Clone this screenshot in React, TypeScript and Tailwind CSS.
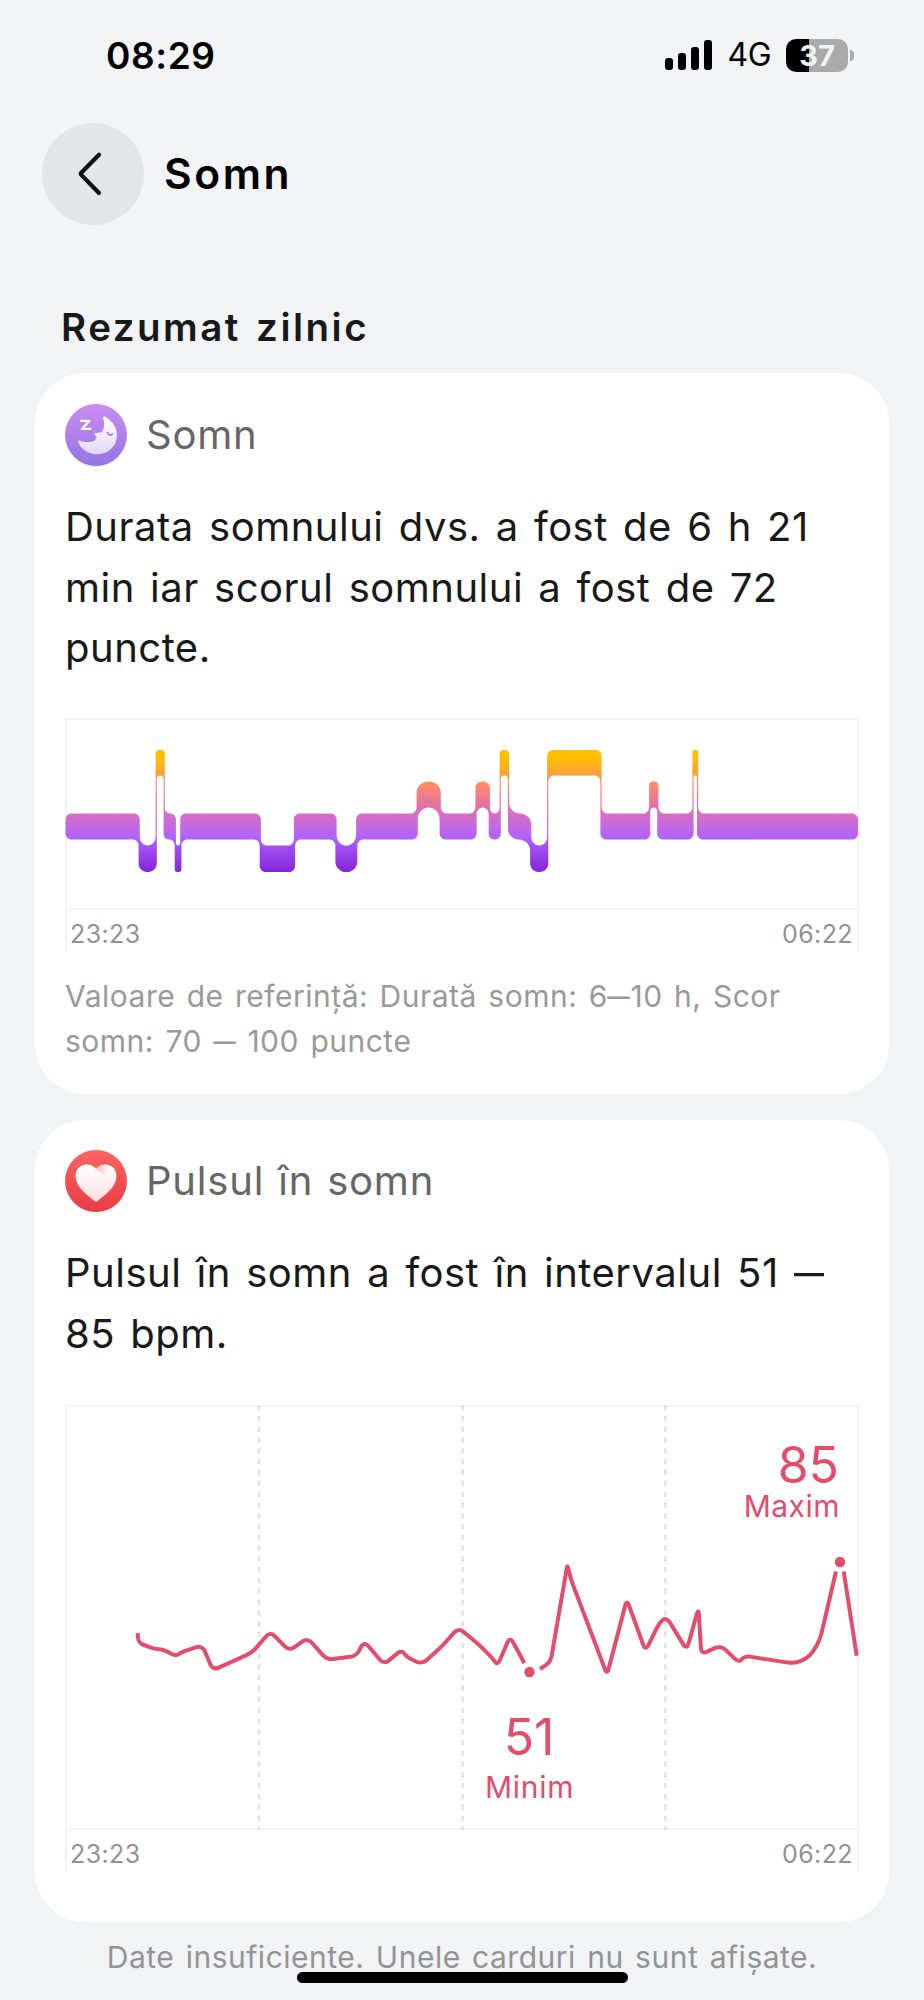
import React from 'react'

type Stage = 'awake' | 'rem' | 'light' | 'deep'

// top and bottom of every sleep stage inside the chart
const LEVELS: Record<Stage, [number, number]> = {
    awake: [31, 56.5],
    rem: [62.5, 88.5],
    light: [94.5, 120.5],
    deep: [126.5, 153],
}

// stage and the x where it ends
const STAGES: [Stage, number][] = [
    ['light', 74.2],
    ['deep', 91.2],
    ['awake', 99.2],
    ['light', 110.3],
    ['deep', 115.8],
    ['light', 195.3],
    ['deep', 229.5],
    ['light', 271],
    ['deep', 291.7],
    ['light', 352.2],
    ['rem', 375.2],
    ['light', 411],
    ['rem', 424.3],
    ['light', 435.2],
    ['awake', 443.5],
    ['light', 465.7],
    ['deep', 482.7],
    ['awake', 536],
    ['light', 584.7],
    ['rem', 592.8],
    ['light', 628],
    ['awake', 632.6],
    ['light', 793],
]

type Point = [number, number, number?]

const PULSE: Point[][] = [
    [
        [72.7, 228], [73.3, 238], [91, 244.3], [97.7, 244.3], [111, 251.3], [116, 247.3], [137.3, 240.3], [147.8, 265.3],
        [187, 247.7], [205.3, 226.5], [224.3, 246], [242.5, 232.8], [262, 254.8], [291.5, 251], [299, 236], [319, 259.5],
        [337, 244.5], [341, 251.7], [357, 259.3], [376.7, 241.5], [393.5, 222.7], [415, 240.5], [428.5, 254.5],
        [432.5, 260.5], [445, 231.5], [459.3, 258],
    ],
    [
        [475, 264], [485.5, 257], [488, 243], [502.3, 160, 2], [506.5, 176], [538, 259], [542, 270], [561.8, 194.5],
        [580.5, 246], [594.5, 217.5], [601.5, 212], [621.7, 245], [633.5, 203], [636.3, 249.5], [655.7, 240.3],
        [674.5, 258], [679, 250.7], [715, 256.5, 15], [735, 259, 15], [753, 243, 15], [771, 166.5],
    ],
    [
        [778.7, 166.5], [791.7, 250.7],
    ],
]

// polyline with rounded corners, the third item of a point is its radius
function roundPath(points: Point[], radius: number, closed = false) {
    const n = points.length
    let d = ''
    points.forEach((p, i) => {
        if (!closed && (i === 0 || i === n - 1)) {
            d += `${i ? 'L' : 'M'}${p[0]} ${p[1]}`
            return
        }
        const prev = points[(i - 1 + n) % n]
        const next = points[(i + 1) % n]
        const a = Math.hypot(prev[0] - p[0], prev[1] - p[1]) || 1
        const b = Math.hypot(next[0] - p[0], next[1] - p[1]) || 1
        const r = p[2] ?? radius
        const ra = Math.min(r, a / 2)
        const rb = Math.min(r, b / 2)
        const at = (q: Point, len: number, dist: number) =>
            `${(p[0] + ((q[0] - p[0]) * dist) / len).toFixed(2)} ${(p[1] + ((q[1] - p[1]) * dist) / len).toFixed(2)}`
        d += `${i ? 'L' : 'M'}${at(prev, a, ra)}C${at(prev, a, ra * 0.45)} ${at(next, b, rb * 0.45)} ${at(next, b, rb)}`
    })
    return closed ? d + 'Z' : d
}

function stagesPath() {
    const top: Point[] = []
    const bottom: Point[] = []
    let start = 0.5
    STAGES.forEach(([stage, end], i) => {
        const [y1, y2] = LEVELS[stage]
        const w = end - start
        const r = w < 10 ? w / 2.2 : w < 25 ? w / 2 : 6
        const prev = STAGES[i - 1]
        const next = STAGES[i + 1]
        // half of the thin line between two stages
        const s = prev ? (LEVELS[prev[0]][0] < y1 ? 0.6 : -0.6) : 0
        const e = next ? (LEVELS[next[0]][0] > y1 ? 0.6 : -0.6) : 0
        top.push([start + s, y1, r], [end + e, y1, r])
        bottom.push([start - s, y2, r], [end - e, y2, r])
        start = end
    })
    return roundPath([...top, ...bottom.reverse()], 6, true)
}

const StatusBar = () => (
    <div className="flex h-[110px] items-center justify-between pl-[106px] pr-[70px]">
        <span className="text-[37px] font-semibold leading-none tracking-[0.6px] text-black">08:29</span>
        <div className="flex items-center">
            <div className="flex h-[30px] items-end gap-[5px]">
                <i className="h-[12px] w-[8px] rounded-[3px] bg-black" />
                <i className="h-[17px] w-[8px] rounded-[3px] bg-black" />
                <i className="h-[23px] w-[8px] rounded-[3px] bg-black" />
                <i className="h-[30px] w-[8px] rounded-[3px] bg-black" />
            </div>
            <span className="ml-[15px] text-[32px] leading-none tracking-[-0.5px] text-black">4G</span>
            <div className="ml-[15px] flex h-[33px] w-[62px] items-center justify-center rounded-[10px] bg-[linear-gradient(90deg,#000_37%,#aaa_37%)] text-[29px] font-bold leading-none text-[#f2f3f5]">
                37
            </div>
            <i className="ml-[2px] h-[11px] w-[4px] rounded-r-full bg-[#aaa]" />
        </div>
    </div>
)

const MoonIcon = () => (
    <svg className="size-[62px]" viewBox="0 0 184 184">
        <defs>
            <linearGradient id="moonBg" x1="0" y1="0" x2="0" y2="1">
                <stop offset="0" stopColor="#cb8cef" />
                <stop offset="1" stopColor="#9475e4" />
            </linearGradient>
            <linearGradient id="moon" x1="0" y1="0" x2="0" y2="1">
                <stop offset="0" stopColor="#fff" />
                <stop offset="1" stopColor="#e3d8fa" />
            </linearGradient>
        </defs>
        <circle cx="92" cy="92" r="92" fill="url(#moonBg)" />
        <path d="M48 50h24L50 74h25" fill="none" stroke="#fff" strokeWidth="7" strokeLinecap="round" strokeLinejoin="round" />
        <path
            d="M113 41c1-4 5-5 8-2 21 12 33 31 33 53 0 33-25 57-58 57-27 0-50-15-57-36-1-4 2-6 5-4 13 5 31 5 44 0 4-2 1-5 4-7 3-1 3-3 1-5-3-4-6-6-5-9 2-3 17-2 21-5 9-10 8-26 4-42z"
            fill="url(#moon)"
        />
        <path d="M126 85c3 7 10 9 15 4" fill="none" stroke="#9b78e4" strokeWidth="5" strokeLinecap="round" />
    </svg>
)

const HeartIcon = () => (
    <svg className="size-[62px]" viewBox="0 0 62 62">
        <defs>
            <linearGradient id="heartBg" x1="0" y1="0" x2="0" y2="1">
                <stop offset="0" stopColor="#fb6562" />
                <stop offset="1" stopColor="#ea3b45" />
            </linearGradient>
            <linearGradient id="heart" x1="0" y1="0" x2="0" y2="1">
                <stop offset="0" stopColor="#fff" />
                <stop offset="1" stopColor="#fde0e1" />
            </linearGradient>
            <radialGradient id="heartFold" gradientUnits="userSpaceOnUse" cx="33" cy="19" r="11">
                <stop offset="0" stopColor="#fbb9b6" stopOpacity="0.9" />
                <stop offset="1" stopColor="#fbb9b6" stopOpacity="0" />
            </radialGradient>
        </defs>
        <circle cx="31" cy="31" r="31" fill="url(#heartBg)" />
        <path
            d="M31 18.500C28 15.500 25 14.500 21.500 14.500 15 14.500 10.500 19.500 10.500 26 10.500 36 19.500 43 29.500 51Q31 52 32.500 51C42.500 43 51.500 36 51.500 26 51.500 19.500 47 14.500 40.500 14.500 37 14.500 34 15.500 31 18.500Z"
            fill="url(#heart)"
        />
        <path d="M31 18.500C34 15.500 37 14.500 40.500 14.500 45 14.500 48 17 49.500 20L43 30Q38 24 31 18.500Z" fill="url(#heartFold)" />
    </svg>
)

const CardTitle = ({ icon, title }: { icon: React.ReactNode; title: string }) => (
    <div className="flex h-[62px] items-center gap-[19px] text-[40px] text-[#666]">
        {icon}
        <span className="tracking-[0.8px] [word-spacing:2px]">{title}</span>
    </div>
)

// wide en dash
const Dash = () => <span className="mx-[0.12em] inline-block scale-x-[1.5]">–</span>

const TimeRow = () => (
    <div className="flex h-[41px] justify-between border-x-2 border-[#f3f3f4] pl-[3px] pr-[4px] pt-[9px] text-[25px] leading-[30px] tracking-[0.4px] text-[#929292]">
        <span>23:23</span>
        <span>06:22</span>
    </div>
)

const App = () => {
    return (
        <div className="flex h-[2000px] w-[924px] flex-col overflow-hidden bg-[#f2f3f5] font-['Inter',sans-serif]">
            <StatusBar />

            <header className="mt-[12px] flex h-[103px] items-center gap-[20px] pl-[42px]">
                <button className="flex size-[102px] items-center justify-center rounded-full bg-[#e4e5e7]">
                    <svg className="size-[50px]" viewBox="0 0 50 50" fill="none" stroke="#111" strokeWidth="4.200" strokeLinecap="round" strokeLinejoin="round">
                        <path d="M31 5.700 13.300 23.700Q12.300 24.800 13.300 25.900L31 44" />
                    </svg>
                </button>
                <h1 className="text-[42.500px] font-semibold tracking-[2.6px] text-black">Somn</h1>
            </header>

            <h2 className="mt-[72px] h-[76px] pl-[61px] text-[38.500px] font-semibold leading-[60px] tracking-[2.500px] text-[#18191b] [word-spacing:3px]">
                Rezumat zilnic
            </h2>

            <section className="mx-[35px] h-[721px] shrink-0 rounded-[50px] bg-white px-[30px] pt-[31px]">
                <CardTitle icon={<MoonIcon />} title="Somn" />
                <p className="mt-[31px] whitespace-nowrap text-[40px] leading-[60.500px] tracking-[0.5px] text-[#18191b] [word-spacing:3.500px]">
                    Durata somnului dvs. a fost de 6 h 21<br />
                    min iar scorul somnului a fost de 72<br />
                    puncte.
                </p>
                <div className="mt-[39px] h-[192px] border-2 border-[#f3f3f4]">
                    <svg className="-mx-[2px] -mt-[1px] block h-[191px] w-[794px]" viewBox="0 0 794 191">
                        <defs>
                            <linearGradient id="stages" gradientUnits="userSpaceOnUse" x1="0" y1="31" x2="0" y2="153">
                                <stop offset="0.060" stopColor="#ffc000" />
                                <stop offset="0.200" stopColor="#ff9f3d" />
                                <stop offset="0.280" stopColor="#ff8b66" />
                                <stop offset="0.460" stopColor="#e170a6" />
                                <stop offset="0.530" stopColor="#d66fc3" />
                                <stop offset="0.720" stopColor="#b062ff" />
                                <stop offset="0.800" stopColor="#a04ff0" />
                                <stop offset="1" stopColor="#8424da" />
                            </linearGradient>
                        </defs>
                        <path d={stagesPath()} fill="url(#stages)" />
                    </svg>
                </div>
                <TimeRow />
                <p className="mt-[23px] whitespace-nowrap text-[30px] leading-[45px] tracking-[0.500px] text-[#999] [word-spacing:2.500px]">
                    Valoare de referință: Durată somn: 6<Dash />10 h, Scor<br />
                    somn: 70 <Dash /> 100 puncte
                </p>
            </section>

            <section className="mx-[35px] mt-[26px] h-[802px] shrink-0 rounded-[50px] bg-white px-[30px] pt-[30px]">
                <CardTitle icon={<HeartIcon />} title="Pulsul în somn" />
                <p className="mt-[31px] whitespace-nowrap text-[40px] leading-[60.500px] tracking-[0.5px] text-[#18191b] [word-spacing:3.500px]">
                    Pulsul în somn a fost în intervalul 51 <Dash /><br />
                    85 bpm.
                </p>
                <div className="relative mt-[41px] h-[425px] border-2 border-[#f3f3f4] text-[#e44c6b]">
                    <svg className="-m-[2px] block h-[425px] w-[794px]" viewBox="0 0 794 425" fill="none">
                        <path d="M194 0V425M397.500 0V425M600.500 0V425" stroke="#e2e2e2" strokeWidth="2.500" strokeDasharray="5.500 5.300" />
                        {PULSE.map((points, i) => (
                            <path key={i} d={roundPath(points, 6)} stroke="currentColor" strokeWidth="4" />
                        ))}
                        <circle cx="464.500" cy="267" r="5.200" fill="currentColor" />
                        <circle cx="775" cy="157" r="5.200" fill="currentColor" />
                    </svg>
                    <div className="absolute right-[17px] top-[33px] text-right">
                        <div className="pr-[1px] text-[50px] leading-[50px]">85</div>
                        <div className="text-[30px] leading-[32px] tracking-[0.5px]">Maxim</div>
                    </div>
                    <div className="absolute left-[418px] top-[302px] text-center">
                        <div className="pr-[1px] text-[50px] leading-[56px]">51</div>
                        <div className="mt-[4px] text-[30px] leading-[36px] tracking-[0.7px]">Minim</div>
                    </div>
                </div>
                <TimeRow />
            </section>

            <footer className="relative flex flex-col items-center">
                <p className="mt-[17px] whitespace-nowrap text-[30px] leading-[36px] tracking-[0.5px] text-[#929395] [word-spacing:2.500px]">
                    Date insuficiente. Unele carduri nu sunt afișate.
                </p>
                <div className="absolute left-[297px] top-[50px] h-[11px] w-[331px] rounded-full bg-black" />
            </footer>
        </div>
    )
}

export default App
